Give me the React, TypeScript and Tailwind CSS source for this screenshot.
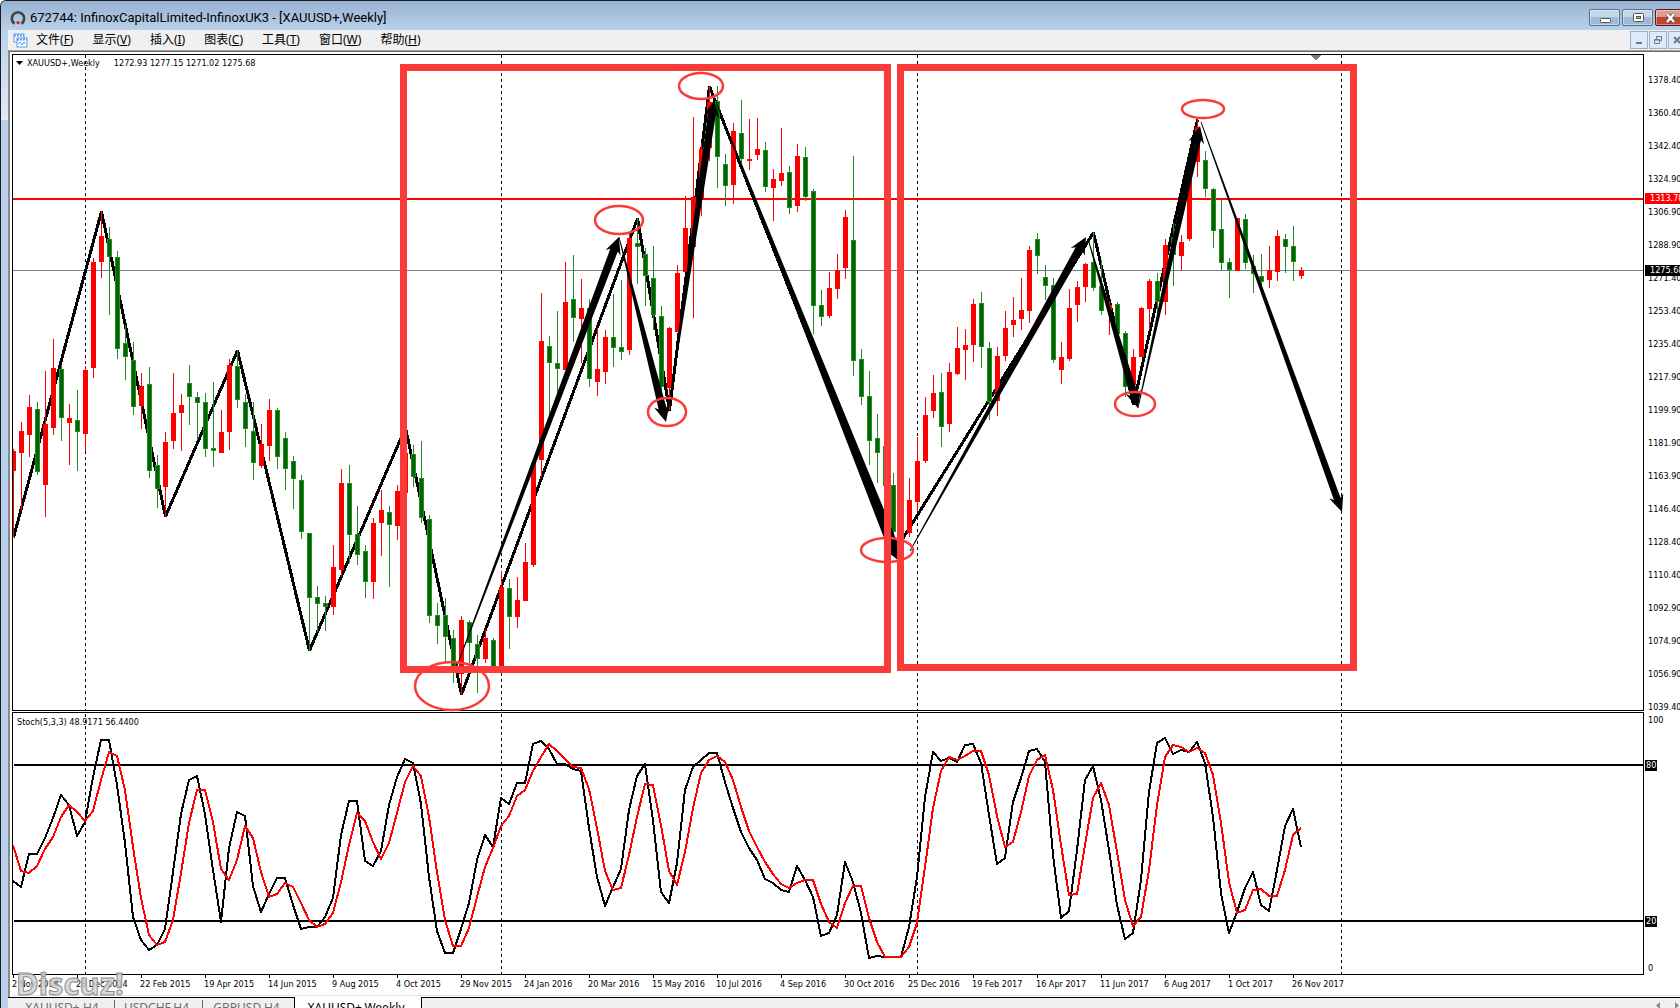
import { Fragment } from "react";

type Candle = [string, number, number, number, number];

const FIRST_X = 13;
const STEP = 8;

// direction, high, body top, body bottom, low
const candles: (Candle | null)[] = [
  ["r", 449, 451, 471, 537], ["r", 422, 431, 453, 510], ["r", 395, 407, 435, 457], ["g", 402, 409, 472, 475],
  ["r", 371, 424, 485, 517], ["r", 339, 368, 428, 435], ["g", 365, 369, 418, 441], ["r", 404, 418, 423, 465],
  ["g", 390, 420, 432, 471], ["r", 366, 370, 434, 451], ["r", 258, 262, 368, 378], ["r", 211, 236, 262, 278],
  ["g", 227, 239, 257, 315], ["g", 251, 257, 349, 359], ["g", 325, 343, 357, 380], ["g", 342, 360, 407, 415],
  ["r", 373, 386, 406, 429], ["g", 367, 384, 471, 478], ["g", 455, 465, 489, 508], ["r", 432, 442, 487, 517],
  ["r", 373, 413, 441, 449], ["r", 394, 405, 413, 451], ["g", 365, 383, 397, 425], ["g", 392, 397, 403, 440],
  ["g", 393, 402, 449, 457], ["g", 382, 448, 451, 467], ["r", 410, 432, 453, 453], ["r", 359, 365, 432, 450],
  ["g", 350, 366, 400, 408], ["g", 394, 402, 429, 447], ["g", 402, 431, 463, 480], ["r", 424, 444, 466, 468],
  ["r", 399, 410, 446, 461], ["g", 408, 410, 457, 469], ["g", 432, 438, 469, 490], ["g", 456, 461, 479, 509],
  ["g", 475, 480, 532, 539], ["g", 533, 533, 598, 651], ["g", 586, 597, 604, 632], ["g", 596, 603, 607, 631],
  ["r", 545, 567, 607, 615], ["r", 469, 483, 570, 577], ["g", 465, 483, 535, 563], ["g", 506, 534, 555, 565],
  ["g", 545, 551, 582, 598], ["r", 518, 523, 582, 599], ["r", 490, 510, 523, 556], ["g", 506, 512, 525, 587],
  ["r", 485, 491, 526, 540], ["r", 430, 453, 493, 493], ["g", 445, 454, 477, 487], ["g", 441, 478, 518, 523],
  ["g", 515, 519, 616, 623], ["g", 603, 615, 626, 644], ["g", 598, 615, 637, 661], ["g", 630, 638, 672, 683],
  ["r", 616, 620, 674, 695], ["g", 620, 622, 643, 665], ["g", 635, 644, 659, 693], ["r", 629, 638, 659, 663],
  ["g", 638, 640, 668, 668], ["r", 571, 587, 668, 668], ["g", 579, 588, 617, 649], ["r", 577, 600, 617, 628],
  ["r", 543, 562, 601, 601], ["r", 460, 463, 565, 567], ["r", 293, 341, 460, 477], ["g", 336, 346, 363, 428],
  ["g", 311, 363, 369, 407], ["r", 262, 302, 370, 370], ["g", 255, 299, 318, 342], ["r", 279, 308, 319, 363],
  ["g", 299, 308, 379, 387], ["r", 328, 369, 382, 396], ["r", 330, 337, 372, 384], ["g", 294, 337, 348, 367],
  ["g", 280, 347, 352, 360], ["r", 232, 238, 350, 355], ["g", 218, 243, 247, 284], ["g", 248, 254, 276, 306],
  ["g", 246, 278, 315, 330], ["g", 306, 316, 387, 403], ["r", 327, 328, 388, 410], ["r", 265, 273, 332, 332],
  ["r", 196, 228, 272, 272], ["r", 117, 197, 247, 318], ["r", 143, 149, 200, 216], ["r", 86, 102, 148, 161],
  ["g", 86, 101, 157, 188], ["g", 154, 164, 186, 206], ["r", 123, 131, 185, 204], ["g", 100, 133, 159, 163],
  ["r", 119, 159, 161, 170], ["r", 118, 149, 155, 160], ["g", 142, 150, 187, 192], ["r", 169, 179, 188, 221],
  ["r", 128, 173, 181, 186], ["g", 166, 172, 208, 214], ["r", 144, 156, 206, 212], ["g", 147, 157, 197, 201],
  ["g", 189, 191, 306, 334], ["g", 290, 305, 317, 326], ["r", 272, 288, 316, 318], ["r", 254, 270, 289, 299],
  ["r", 210, 217, 268, 279], ["g", 156, 240, 361, 376], ["g", 349, 359, 397, 405], ["g", 371, 396, 441, 465],
  ["g", 414, 438, 453, 483], ["g", 440, 446, 486, 495], ["g", 473, 485, 532, 553], null,
  ["r", 478, 500, 533, 537], ["r", 437, 461, 502, 512], ["r", 397, 415, 461, 463], ["r", 375, 393, 411, 418],
  ["g", 373, 392, 427, 447], ["r", 363, 372, 424, 432], ["r", 327, 348, 374, 375], ["r", 329, 345, 350, 380],
  ["r", 299, 304, 345, 362], ["g", 292, 303, 347, 368], ["g", 342, 348, 402, 420], ["r", 347, 356, 401, 416],
  ["r", 311, 328, 356, 361], ["r", 297, 320, 325, 337], ["r", 278, 310, 319, 330], ["r", 246, 250, 311, 323],
  ["g", 233, 239, 256, 274], ["g", 265, 277, 286, 300], ["g", 278, 285, 360, 363], ["r", 342, 357, 370, 384],
  ["r", 289, 308, 359, 361], ["r", 281, 287, 305, 322], ["r", 263, 264, 287, 302], ["g", 232, 262, 288, 291],
  ["g", 260, 286, 311, 315], ["r", 301, 305, 310, 335], ["g", 302, 304, 334, 336], ["g", 331, 333, 387, 397],
  ["r", 349, 357, 385, 390], ["r", 307, 308, 357, 357], ["r", 279, 281, 309, 329], ["g", 273, 281, 302, 313],
  ["r", 239, 245, 302, 315], ["g", 223, 237, 255, 286], ["r", 235, 242, 256, 270], ["r", 177, 180, 239, 241],
  ["r", 119, 127, 162, 177], ["g", 151, 160, 189, 197], ["g", 188, 189, 231, 248], ["g", 199, 229, 263, 270],
  ["g", 258, 262, 270, 298], ["r", 218, 218, 271, 271], ["g", 214, 219, 263, 269], ["g", 255, 266, 274, 293],
  ["g", 254, 276, 282, 286], ["r", 246, 270, 280, 288], ["r", 230, 236, 272, 281], ["g", 234, 239, 247, 273],
  ["g", 226, 246, 262, 281], ["r", 267, 270, 276, 279],
];

const stochMain = [
  881, 887, 854, 854, 838, 818, 795, 805, 836, 822, 777, 740, 740, 785, 843, 917, 940, 950, 945, 929, 872, 814, 780,
  776, 814, 870, 922, 848, 812, 816, 886, 912, 894, 878, 878, 905, 929, 927, 927, 917, 898, 835, 801, 801, 861, 866,
  851, 805, 777, 759, 763, 804, 877, 931, 953, 953, 929, 903, 860, 835, 847, 798, 804, 783, 783, 744, 741, 749, 764,
  764, 769, 771, 828, 877, 906, 887, 869, 810, 776, 764, 820, 892, 903, 863, 790, 767, 760, 753, 753, 782, 808, 832,
  848, 860, 879, 883, 890, 892, 866, 880, 897, 936, 933, 915, 862, 882, 913, 958, 956, 957, 957, 957, 927, 877, 797,
  752, 761, 758, 762, 745, 744, 763, 815, 864, 858, 802, 778, 751, 749, 762, 855, 918, 911, 850, 780, 766, 800, 850,
  905, 939, 933, 880, 792, 743, 738, 754, 750, 752, 742, 763, 817, 893, 933, 912, 888, 872, 905, 911, 870, 826, 809,
  847,
];

const stochSignal = [
  845, 871, 873, 866, 849, 837, 817, 805, 812, 821, 811, 780, 752, 756, 790, 847, 898, 935, 945, 942, 920, 873, 823,
  790, 790, 822, 869, 880, 860, 826, 838, 872, 897, 894, 883, 887, 903, 920, 927, 924, 913, 882, 845, 813, 821, 842,
  859, 843, 813, 782, 766, 776, 817, 872, 920, 946, 946, 928, 897, 867, 848, 826, 816, 796, 790, 771, 757, 744, 751,
  759, 767, 768, 789, 828, 871, 890, 888, 855, 817, 784, 785, 825, 871, 885, 852, 808, 773, 760, 756, 762, 780, 807,
  831, 847, 862, 874, 884, 888, 883, 880, 880, 904, 922, 928, 903, 886, 886, 918, 942, 957, 957, 957, 947, 923, 867,
  808, 771, 757, 760, 756, 751, 751, 775, 816, 847, 842, 812, 776, 760, 755, 790, 845, 895, 894, 845, 798, 783, 805,
  852, 900, 926, 917, 870, 805, 757, 745, 747, 752, 748, 753, 775, 823, 882, 913, 910, 890, 889, 896, 896, 870, 835,
  828,
];

const zigzag =
  "13,537 101,211 165,516 237,350 309,650 405,427 461,694 637,218 669,410 709,86 893,553 1093,232 1133,404 1197,119";

// start x, start y, tip x, tip y, shaft width at the head
const arrows = [
  [457, 666, 619, 237, 8],
  [619, 237, 666, 422, 8],
  [668, 412, 714, 100, 8],
  [716, 102, 899, 561, 11],
  [910, 551, 1086, 237, 8],
  [1088, 239, 1138, 408, 8],
  [1138, 408, 1200, 126, 8],
  [1201, 122, 1342, 512, 7],
];

const ellipses = [
  [452, 686, 37, 24],
  [619, 220, 24, 14],
  [701, 86, 22, 13],
  [667, 412, 19, 14],
  [887, 550, 26, 12],
  [1135, 404, 20, 12],
  [1203, 109, 21, 9],
];

const periodLines = [85, 501, 917, 1341];

const prices = [
  "1378.40", "1360.40", "1342.40", "1324.90", "1306.90", "1288.90", "1271.40", "1253.40", "1235.40", "1217.90",
  "1199.90", "1181.90", "1163.90", "1146.40", "1128.40", "1110.40", "1092.90", "1074.90", "1056.90", "1039.40",
];

const dates = [
  "2 Nov 2014", "28 Dec 2014", "22 Feb 2015", "19 Apr 2015", "14 Jun 2015", "9 Aug 2015", "4 Oct 2015",
  "29 Nov 2015", "24 Jan 2016", "20 Mar 2016", "15 May 2016", "10 Jul 2016", "4 Sep 2016", "30 Oct 2016",
  "25 Dec 2016", "19 Feb 2017", "16 Apr 2017", "11 Jun 2017", "6 Aug 2017", "1 Oct 2017", "26 Nov 2017",
];

const menus = [
  ["文件", "F"],
  ["显示", "V"],
  ["插入", "I"],
  ["图表", "C"],
  ["工具", "T"],
  ["窗口", "W"],
  ["帮助", "H"],
];

const toPoints = (values: number[]) => values.map((y, i) => `${FIRST_X + i * STEP},${y}`).join(" ");

const arrowPoints = ([x1, y1, x2, y2, width]: number[]) => {
  const length = Math.hypot(x2 - x1, y2 - y1);
  const ux = (x2 - x1) / length;
  const uy = (y2 - y1) / length;
  const at = (back: number, side: number) => `${x2 - ux * back - uy * side},${y2 - uy * back + ux * side}`;
  const half = width / 2;

  return [
    at(length, 0.4),
    at(14, half),
    at(17, half + 4),
    at(0, 0),
    at(17, -half - 4),
    at(14, -half),
    at(length, -0.4),
  ].join(" ");
};

const AppIcon = () => (
  <svg className="size-4" viewBox="0 0 16 16" fill="none">
    <path d="M4.6 13.6A6.2 6.2 0 1 1 11.4 13.6" stroke="#3f4247" strokeWidth="2.6" />
    <circle cx="8" cy="12.6" r="1.6" fill="#e8112d" />
  </svg>
);

const ChartIcon = () => (
  <svg className="size-[15px]" viewBox="0 0 15 15" fill="#fff" stroke="#5b9be8">
    <rect x="1" y="1" width="10" height="8" />
    <path d="M1 2.5h10" strokeWidth="2" strokeDasharray="2 1" />
    <rect x="4" y="5" width="10" height="9" />
    <path d="M4 6.5h10" strokeWidth="2" strokeDasharray="2 1" />
    <path d="M5.5 11l1.5-2 2 3 2-3 1.500 2" fill="none" />
  </svg>
);

const TitleBar = () => (
  <header className="flex h-[29px] shrink-0 items-center bg-linear-to-b from-[#97b1d1] to-[#b9d1ea] pt-1 pl-[9px]">
    <AppIcon />
    <h1 className="ml-1 flex-1 truncate font-['Roboto',sans-serif] text-[13px] leading-5 text-black">
      672744: InfinoxCapitalLimited-InfinoxUK3 - [XAUUSD+,Weekly]
    </h1>
    <div className="-mr-1.5 flex gap-0.5">
      <button
        aria-label="Minimize"
        className="flex h-[17px] w-[31px] items-center justify-center rounded-xs border border-[#5c6f8b] bg-linear-to-b from-[#c3d5e9] from-50% to-[#9db9d6] to-50% ring-1 ring-white/40 ring-inset"
      >
        <svg className="h-3 w-4" viewBox="0 0 16 12">
          <rect x="3.500" y="6.500" width="10" height="4" rx="1" fill="#fff" stroke="#555" />
        </svg>
      </button>
      <button
        aria-label="Maximize"
        className="flex h-[17px] w-[31px] items-center justify-center rounded-xs border border-[#5c6f8b] bg-linear-to-b from-[#c3d5e9] from-50% to-[#9db9d6] to-50% ring-1 ring-white/40 ring-inset"
      >
        <svg className="h-3 w-4" viewBox="0 0 16 12">
          <rect x="3.500" y="1.500" width="10" height="8" rx="1" fill="#fff" stroke="#555" />
          <rect x="6.500" y="4.500" width="4" height="2" fill="#9db9d6" stroke="#555" />
        </svg>
      </button>
      <button
        aria-label="Close"
        className="flex h-[17px] w-[31px] items-center justify-center rounded-xs border border-[#5b1a1a] bg-linear-to-b from-[#e09a90] from-50% to-[#bd4530] to-50% ring-1 ring-white/40 ring-inset"
      >
        <svg className="h-3 w-4" viewBox="0 0 16 12">
          <path d="M4 2l7 8M11 2l-7 8" stroke="#555" strokeWidth="4" />
          <path d="M4 2l7 8M11 2l-7 8" stroke="#fff" strokeWidth="2.400" />
        </svg>
      </button>
    </div>
  </header>
);

const MenuBar = () => (
  <nav className="flex h-5 shrink-0 items-center bg-[#f0f0f0] pl-[5px]">
    <ChartIcon />
    <div className="-ml-0.5 flex flex-1">
      {menus.map(([label, key]) => (
        <button key={key} className="pr-[9px] pl-[10px] text-xs leading-5 text-black">
          {label}(<span className="underline">{key}</span>)
        </button>
      ))}
    </div>
    <div className="-mr-1.5 flex gap-px">
      <button
        aria-label="Minimize chart"
        className="flex h-[18px] w-[18px] items-center justify-center border border-[#9fb0c1] bg-[#dcebf9]"
      >
        <svg className="size-3" viewBox="0 0 12 12">
          <path d="M3 9h6" stroke="#6c7b8a" strokeWidth="2" />
        </svg>
      </button>
      <button
        aria-label="Restore chart"
        className="flex h-[18px] w-[18px] items-center justify-center border border-[#9fb0c1] bg-[#dcebf9]"
      >
        <svg className="size-3" viewBox="0 0 12 12" fill="none" stroke="#6c7b8a">
          <path d="M4.500 5V2.500h5v4H8M4 2.500h6M2.500 5.500h5v4h-5zM2 6h6" />
        </svg>
      </button>
      <button
        aria-label="Close chart"
        className="flex h-[18px] w-[18px] items-center justify-center border border-[#9fb0c1] bg-[#dcebf9]"
      >
        <svg className="size-3" viewBox="0 0 12 12">
          <path d="M3 3l6 6M9 3l-6 6" stroke="#6c7b8a" strokeWidth="2" />
        </svg>
      </button>
    </div>
  </nav>
);

const PricePlot = () => (
  <svg className="block h-[655px] w-full overflow-visible">
    <g transform="translate(-13,-55)">
      <g shapeRendering="crispEdges">
        {periodLines.map((x) => (
          <path key={x} d={`M${x + 0.5} 55V710`} stroke="#000" strokeDasharray="3 3" />
        ))}
        <rect x="13" y="198" width="100%" height="2" fill="#f00" />
        <rect x="13" y="270" width="100%" height="1" fill="#708090" />
        <polyline
          points={zigzag}
          transform="translate(0.5,0.5)"
          fill="none"
          stroke="#000"
          strokeWidth="3"
          strokeLinejoin="bevel"
        />
        {candles.map((candle, i) => {
          if (!candle) return null;
          const [kind, high, top, bottom, low] = candle;
          const x = FIRST_X + i * STEP;
          const color = kind === "r" ? "#ff0000" : "#228b22";
          return (
            <Fragment key={x}>
              <rect x={x} y={high} width="1" height={low - high} fill={color} />
              <rect x={Math.max(x - 2, 13)} y={top} width={x === 13 ? 3 : 5} height={bottom - top} fill={color} />
              {kind === "g" && (
                <rect x={x - 1} y={top + 1} width="3" height={Math.max(bottom - top - 2, 1)} fill="#006400" />
              )}
            </Fragment>
          );
        })}
        <path d="M1310 55h11l-5 6z" fill="#708090" />
      </g>
      {arrows.map((arrow, i) => (
        <polygon key={i} points={arrowPoints(arrow)} fill="#000" />
      ))}
      <g fill="none" stroke="#fb3a3a">
        {ellipses.map(([cx, cy, rx, ry]) => (
          <ellipse key={cx} cx={cx} cy={cy} rx={rx} ry={ry} strokeWidth="2.5" />
        ))}
        <rect x="403.5" y="67.5" width="484" height="602" strokeWidth="7" />
        <rect x="900.5" y="67.5" width="453" height="600" strokeWidth="7" />
      </g>
    </g>
  </svg>
);

const StochPlot = () => (
  <svg className="block h-[261px] w-full">
    <g transform="translate(-13,-713)" shapeRendering="crispEdges">
      {periodLines.map((x) => (
        <path key={x} d={`M${x + 0.5} 714V974`} stroke="#000" strokeDasharray="3 3" />
      ))}
      <rect x="14" y="764" width="100%" height="2" fill="#000" />
      <rect x="14" y="920" width="100%" height="2" fill="#000" />
      <g fill="none" strokeWidth="2" strokeLinejoin="round">
        <polyline points={toPoints(stochMain)} stroke="#000" />
        <polyline points={toPoints(stochSignal)} stroke="#f00" />
      </g>
    </g>
  </svg>
);

const PriceAxis = () => (
  <div className="relative h-[657px] w-9 shrink-0 pt-[10px]">
    {prices.map((price) => (
      <div key={price} className="flex h-[33px] items-center">
        <span className="h-px w-0.5 bg-black" />
        <span className="ml-1 pt-px">{price}</span>
      </div>
    ))}
    <span className="absolute top-[139px] left-px h-[11px] w-10 bg-[#f00] pl-[5px] leading-[11px] text-white">
      1313.78
    </span>
    <span className="absolute top-[211px] left-px h-[11px] w-10 bg-black pl-[5px] leading-[11px] text-white">
      1275.68
    </span>
  </div>
);

const StochAxis = () => (
  <div className="relative flex h-[263px] w-9 shrink-0 flex-col justify-between pt-px pl-1">
    <span className="leading-[14px]">100</span>
    <span className="leading-[14px]">0</span>
    <span className="absolute top-12 left-px h-[11px] bg-black px-px leading-[11px] text-white">80</span>
    <span className="absolute top-[204px] left-px h-[11px] bg-black px-px leading-[11px] text-white">20</span>
  </div>
);

const DateAxis = () => (
  <div className="relative flex h-5">
    {dates.map((date) => (
      <div key={date} className="w-16 shrink-0">
        <div className="ml-px h-[3px] w-px bg-black" />
        <div className="leading-[13px] whitespace-nowrap">{date}</div>
      </div>
    ))}
    <span className="absolute -top-2 left-1 font-['Noto_Sans',sans-serif] text-[31px] leading-8 font-bold text-[#d2d2d2]/85 [-webkit-text-stroke:1px_#8c8c8c]">
      Discuz!
    </span>
  </div>
);

const ChartTabs = () => (
  <div className="flex h-5 shrink-0 bg-[#f0f0f0] text-xs leading-5 text-[#6d6d6d]">
    <div className="flex flex-1 border-t border-black">
      <button className="my-0.5 w-[107px] border-r border-[#6d6d6d] pl-0.5 leading-4">XAUUSD+,H4</button>
      <button className="my-0.5 w-[88px] border-r border-[#6d6d6d] pr-1 leading-4">USDCHF,H4</button>
      <button className="my-0.5 w-[91px] pr-1 leading-4">GBPUSD,H4</button>
      <button className="-mt-px w-[128px] border-x border-black bg-white pt-px pr-1 text-black">XAUUSD+,Weekly</button>
    </div>
    <div className="flex items-start gap-[15px] border-t border-black pt-1 pr-px">
      <button aria-label="Scroll tabs left">
        <svg className="h-[7px] w-1" viewBox="0 0 4 7" fill="#8a8a8a">
          <path d="M4 0v7L0 3.500z" />
        </svg>
      </button>
      <button aria-label="Scroll tabs right">
        <svg className="h-[7px] w-1" viewBox="0 0 4 7" fill="#8a8a8a">
          <path d="M0 0v7l4-3.500z" />
        </svg>
      </button>
    </div>
  </div>
);

const App = () => {
  return (
    <div className="flex h-screen flex-col overflow-hidden rounded-tl-md border-t border-l border-[#1c1c24] bg-[#b9d1ea] font-['Noto_Sans','Noto_Sans_CJK_SC',sans-serif]">
      <TitleBar />
      <div className="flex min-h-0 flex-1">
        <div className="w-[7px] shrink-0 bg-[#b9d1ea]">
          <div className="h-[90px] bg-linear-to-b from-[#b9d1ea] to-[#e2ebf6]" />
        </div>
        <div className="flex min-w-0 flex-1 flex-col">
          <MenuBar />
          <div className="h-px shrink-0 bg-[#a0a0a0]" />
          <main className="shrink-0 border-t border-l-2 border-t-[#696969] border-l-[#8a8a8a] bg-white pt-0.5 pl-0.5 font-['DejaVu_Sans_Condensed',sans-serif] text-[9px] text-black">
            <div className="relative z-10 flex">
              <div className="relative min-w-0 flex-1 border border-black">
                <PricePlot />
                <p className="absolute top-px left-[3px] flex items-center leading-[14px]">
                  <svg className="mr-1 h-1 w-[7px]" viewBox="0 0 7 4">
                    <path d="M0 0h7L3.500 4z" />
                  </svg>
                  <span className="mr-3.5">XAUUSD+,Weekly</span>
                  <span>1272.93 1277.15 1271.02 1275.68</span>
                </p>
              </div>
              <PriceAxis />
            </div>
            <div className="mt-px flex">
              <div className="relative min-w-0 flex-1 border border-black">
                <StochPlot />
                <p className="absolute top-0.5 left-1 leading-[14px]">Stoch(5,3,3) 48.9171 56.4400</p>
              </div>
              <StochAxis />
            </div>
            <DateAxis />
            <div className="mb-px h-px bg-[#e3e3e3]" />
          </main>
          <ChartTabs />
        </div>
      </div>
    </div>
  );
};

export default App;
